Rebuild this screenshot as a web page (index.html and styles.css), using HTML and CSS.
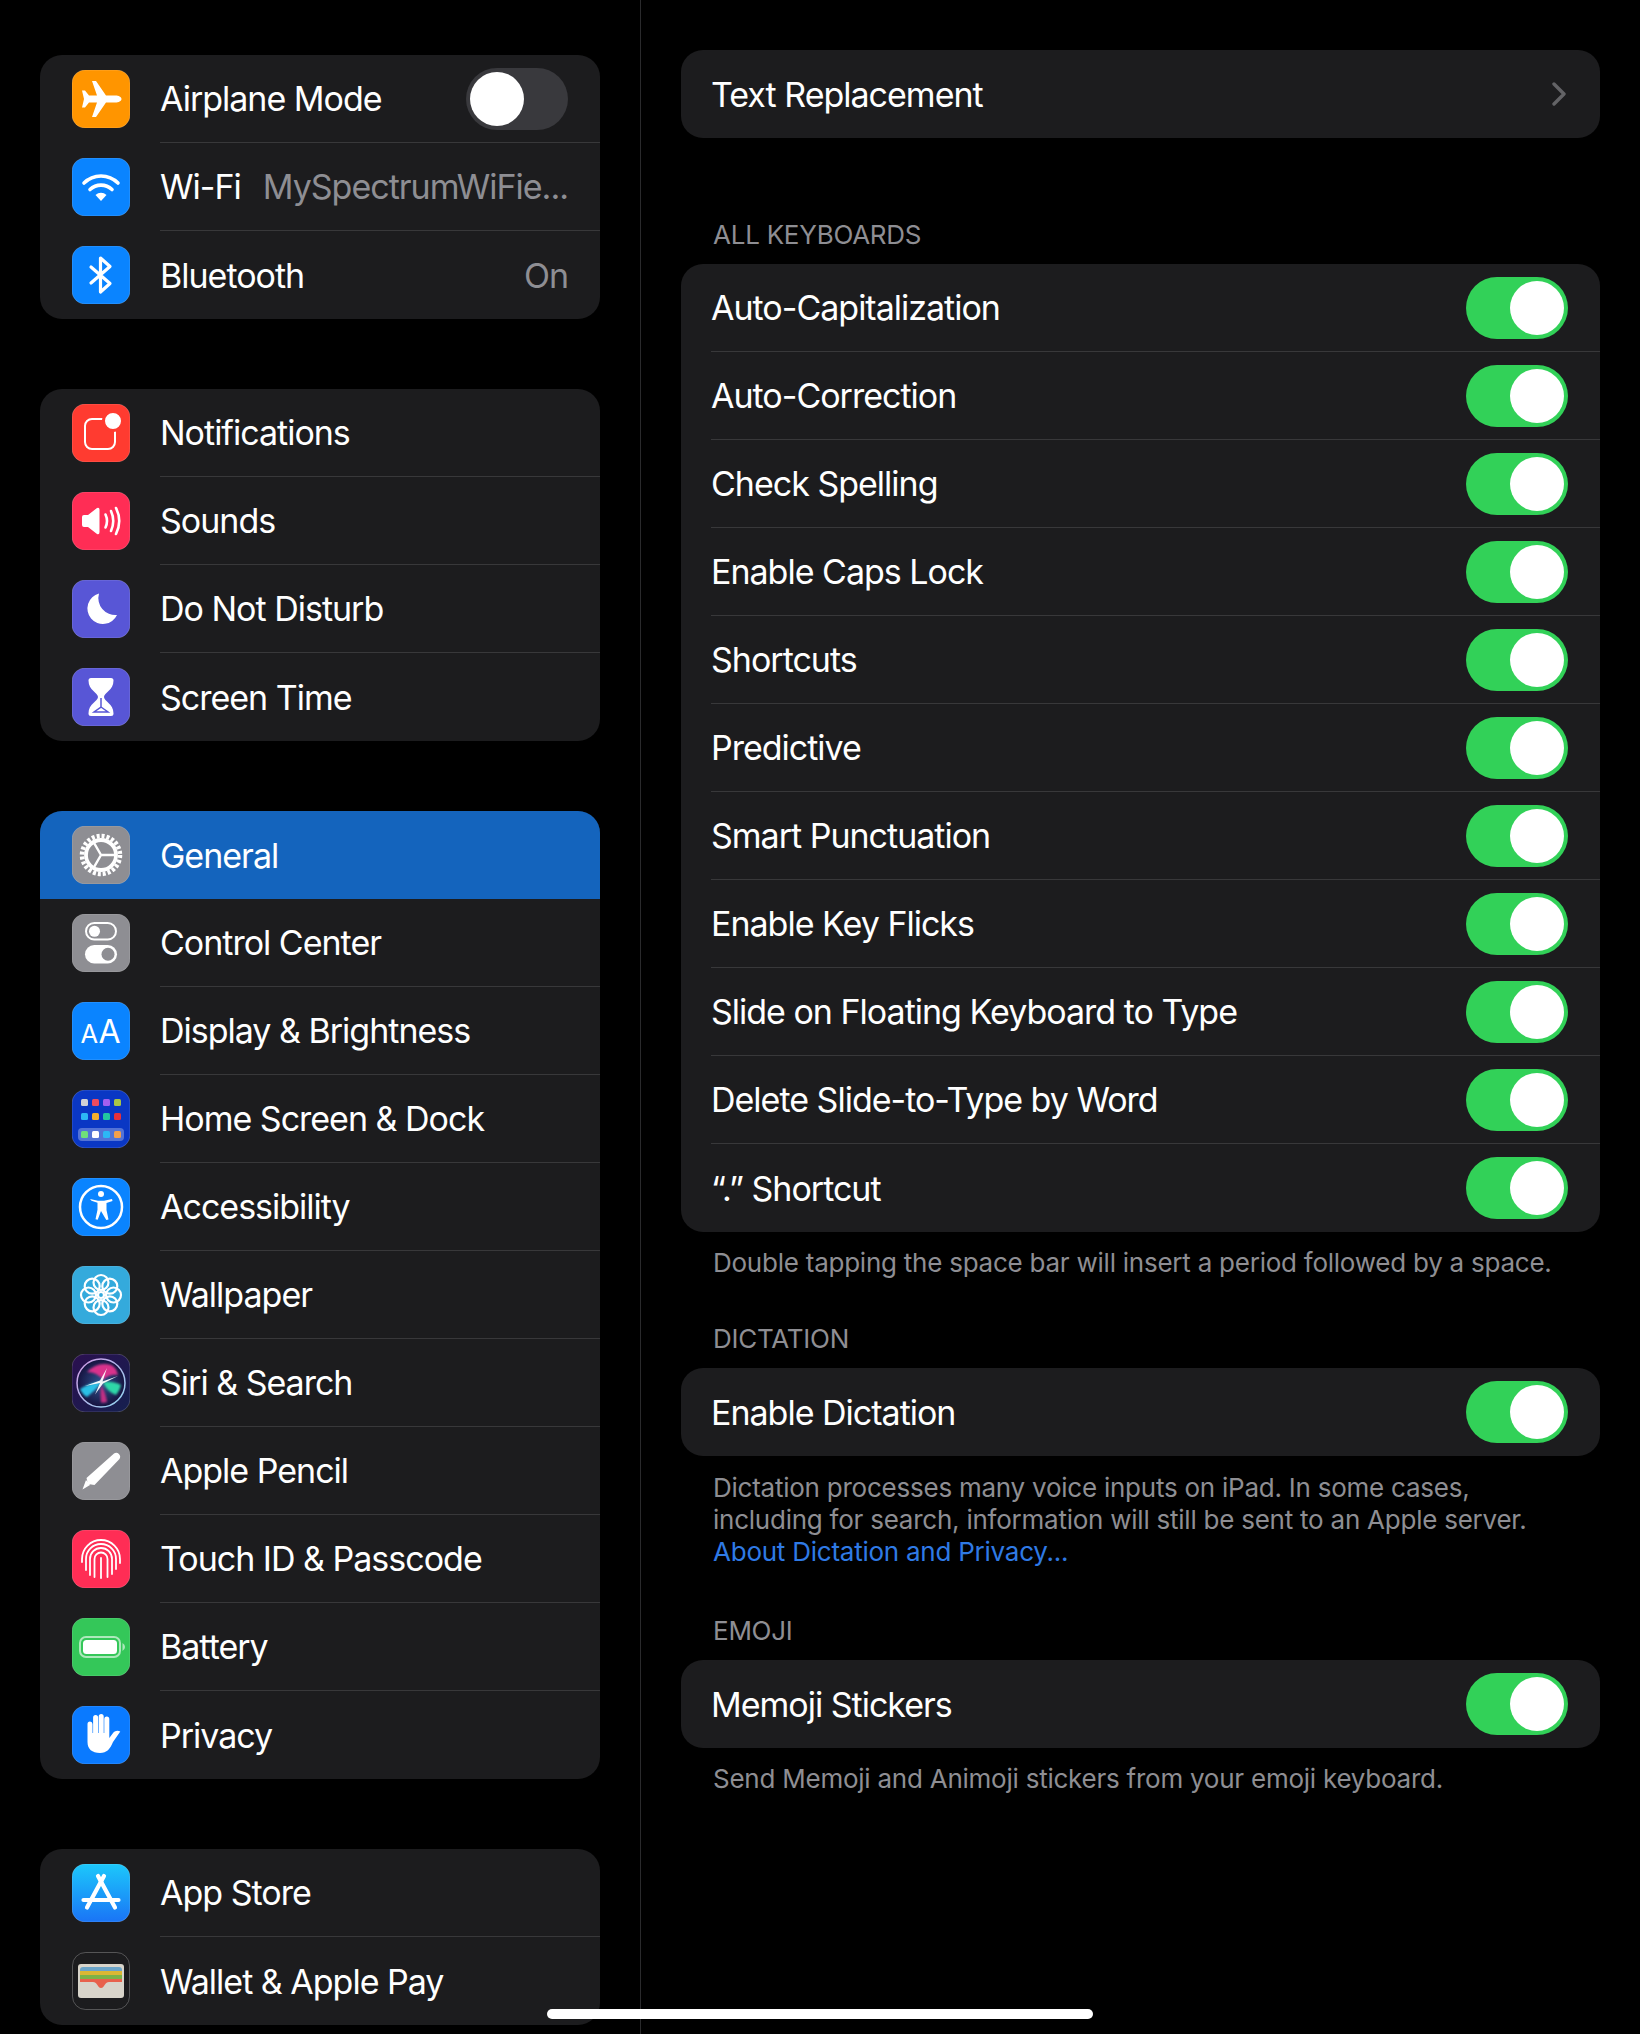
FILE: index.html
```html
<!DOCTYPE html>
<html lang="en">
<head>
    <meta charset="UTF-8">
    <meta name="viewport" content="width=device-width, initial-scale=1.0">
    <title>Keyboard Settings</title>
    <link rel="stylesheet" href="styles.css">
</head>
<body>
    <div class="sidebar">
        <div class="group">
            <div class="nav-row">
                <svg class="icon" viewBox="0 0 58 58"><rect class="tile" width="58" height="58" rx="13" fill="#ff9500"/><path fill="#fff" d="M49.500 29c0-2-3-3.500-6-3.500H34L24 11h-4l5 14.500h-8L13 20.500h-3l2 8.500-2 8.500h3l4-5h8L20 47h4l10-14.500h9.500c3 0 6-1.500 6-3.500z"/></svg>
                <div class="nav-body"><span class="label">Airplane Mode</span><span class="toggle off"><span class="knob"></span></span></div>
            </div>
            <div class="nav-row">
                <svg class="icon" viewBox="0 0 58 58"><rect class="tile" width="58" height="58" rx="13" fill="#0a84ff"/><g fill="none" stroke="#fff" stroke-width="3.600" stroke-linecap="round"><path d="M12 25a24 24 0 0 1 34 0"/><path d="M18 31.500a16 16 0 0 1 22 0"/></g><path fill="#fff" d="M23.500 37a8 8 0 0 1 11 0L29 43z"/></svg>
                <div class="nav-body"><span class="label">Wi-Fi</span><span class="value">MySpectrumWiFie...</span></div>
            </div>
            <div class="nav-row">
                <svg class="icon" viewBox="0 0 58 58"><rect class="tile" width="58" height="58" rx="13" fill="#0a84ff"/><path fill="none" stroke="#fff" stroke-width="3.200" stroke-linecap="round" stroke-linejoin="round" d="M19 21l19 16.500L28.500 46V12l9.500 8.500L19 37"/></svg>
                <div class="nav-body"><span class="label">Bluetooth</span><span class="value">On</span></div>
            </div>
        </div>

        <div class="group">
            <div class="nav-row">
                <svg class="icon" viewBox="0 0 58 58"><rect class="tile" width="58" height="58" rx="13" fill="#ff3b30"/><rect x="13" y="15" width="30" height="30" rx="7" fill="none" stroke="#fff" stroke-width="2"/><circle cx="41" cy="17" r="9.500" fill="#fff" stroke="#ff3b30" stroke-width="3"/></svg>
                <div class="nav-body"><span class="label">Notifications</span></div>
            </div>
            <div class="nav-row">
                <svg class="icon" viewBox="0 0 58 58"><rect class="tile" width="58" height="58" rx="13" fill="#ff2d55"/><path fill="#fff" d="M10 25a2 2 0 0 1 2-2h4l9-7q2.500-1 2.500 2v22q0 3-2.500 2l-9-7h-4a2 2 0 0 1-2-2z"/><g fill="none" stroke="#fff" stroke-width="2.600" stroke-linecap="round"><path d="M33.500 22.500q3 6.500 0 13"/><path d="M39 19q4.500 10 0 20"/><path d="M44 16q6.500 13 0 26"/></g></svg>
                <div class="nav-body"><span class="label">Sounds</span></div>
            </div>
            <div class="nav-row">
                <svg class="icon" viewBox="0 0 58 58"><rect class="tile" width="58" height="58" rx="13" fill="#5856d6"/><path fill="#fff" d="M27 13.500A15.500 15.500 0 1 0 45 35a17 17 0 0 1-18-21.500z"/></svg>
                <div class="nav-body"><span class="label">Do Not Disturb</span></div>
            </div>
            <div class="nav-row">
                <svg class="icon" viewBox="0 0 58 58"><rect class="tile" width="58" height="58" rx="13" fill="#5856d6"/><path fill="#fff" d="M19 10h20a2.500 2.500 0 0 1 2.500 2.500c0 10-9.500 12-9.500 16.500s9.500 6.500 9.500 16.500A2.500 2.500 0 0 1 39 48H19a2.500 2.500 0 0 1-2.500-2.500C16.500 35.500 26 33.500 26 29s-9.500-6.500-9.500-16.500A2.500 2.500 0 0 1 19 10z"/><path fill="none" stroke="#5856d6" stroke-width="1.500" d="M29 30v9l-7 5h14l-7-5"/></svg>
                <div class="nav-body"><span class="label">Screen Time</span></div>
            </div>
        </div>

        <div class="group">
            <div class="nav-row selected">
                <svg class="icon" viewBox="0 0 58 58"><rect class="tile" width="58" height="58" rx="13" fill="#8e8e93"/><circle cx="29" cy="29" r="19" fill="none" stroke="#fff" stroke-width="4.500" stroke-dasharray="3 1.975"/><circle cx="29" cy="29" r="15" fill="none" stroke="#fff" stroke-width="3.800"/><path fill="none" stroke="#fff" stroke-width="2.400" d="M29 29h14M29 29l-7-12.100M29 29l-7 12.100"/></svg>
                <div class="nav-body"><span class="label">General</span></div>
            </div>
            <div class="nav-row">
                <svg class="icon" viewBox="0 0 58 58"><rect class="tile" width="58" height="58" rx="13" fill="#8e8e93"/><rect x="14" y="9" width="30" height="16.500" rx="8.250" fill="none" stroke="#fff" stroke-width="2"/><circle cx="22.500" cy="17.250" r="5.500" fill="#fff"/><rect x="13" y="31" width="32" height="18.500" rx="9.250" fill="#fff"/><circle cx="36" cy="40.250" r="6.500" fill="#8e8e93"/></svg>
                <div class="nav-body"><span class="label">Control Center</span></div>
            </div>
            <div class="nav-row">
                <svg class="icon" viewBox="0 0 58 58"><rect class="tile" width="58" height="58" rx="13" fill="#0a84ff"/><text class="icon-text" x="8.500" y="41" font-size="25.500">A</text><text class="icon-text" x="26.500" y="41" font-size="32">A</text></svg>
                <div class="nav-body"><span class="label">Display &amp; Brightness</span></div>
            </div>
            <div class="nav-row">
                <svg class="icon" viewBox="0 0 58 58"><rect class="tile" width="58" height="58" rx="13" fill="#0a37c4"/><g><rect x="9" y="9" width="7" height="7" rx="1.500" fill="#d1d1d6"/><rect x="20" y="9" width="7" height="7" rx="1.500" fill="#ef4b5f"/><rect x="31" y="9" width="7" height="7" rx="1.500" fill="#a35ff0"/><rect x="42" y="9" width="7" height="7" rx="1.500" fill="#a8c545"/><rect x="9" y="23" width="7" height="7" rx="1.500" fill="#2cb8f5"/><rect x="20" y="23" width="7" height="7" rx="1.500" fill="#f5b02e"/><rect x="31" y="23" width="7" height="7" rx="1.500" fill="#22c8a0"/><rect x="42" y="23" width="7" height="7" rx="1.500" fill="#e8303a"/><rect x="6" y="38" width="46" height="13" rx="4" fill="#fff" fill-opacity=".3"/><rect x="9" y="41" width="7" height="7" rx="1.500" fill="#6fe07a"/><rect x="20" y="41" width="7" height="7" rx="1.500" fill="#fff"/><rect x="31" y="41" width="7" height="7" rx="1.500" fill="#2cb8f5"/><rect x="42" y="41" width="7" height="7" rx="1.500" fill="#f5a04a"/></g></svg>
                <div class="nav-body"><span class="label">Home Screen &amp; Dock</span></div>
            </div>
            <div class="nav-row">
                <svg class="icon" viewBox="0 0 58 58"><rect class="tile" width="58" height="58" rx="13" fill="#0a84ff"/><circle cx="29" cy="29" r="21" fill="none" stroke="#fff" stroke-width="2.500"/><circle cx="29" cy="16" r="3" fill="#fff"/><path fill="#fff" d="M18 21l8 1.800h6l8-1.800.5 2-6 2v7l2 9.500-2.200.5L29 33l-3.300 8.800-2.200-.5 2-9.500v-7l-6-2z"/></svg>
                <div class="nav-body"><span class="label">Accessibility</span></div>
            </div>
            <div class="nav-row">
                <svg class="icon" viewBox="0 0 58 58"><rect class="tile" width="58" height="58" rx="13" fill="#34aadc"/><g fill="none" stroke="#fff" stroke-width="2.200"><circle cx="29" cy="16.500" r="7.500"/><circle cx="29" cy="41.500" r="7.500"/><circle cx="16.500" cy="29" r="7.500"/><circle cx="41.500" cy="29" r="7.500"/><circle cx="20.200" cy="20.200" r="7.500"/><circle cx="37.800" cy="20.200" r="7.500"/><circle cx="20.200" cy="37.800" r="7.500"/><circle cx="37.800" cy="37.800" r="7.500"/><circle cx="29" cy="29" r="3"/></g></svg>
                <div class="nav-body"><span class="label">Wallpaper</span></div>
            </div>
            <div class="nav-row">
                <svg class="icon" viewBox="0 0 58 58"><defs><linearGradient id="siriBg" x1="0" y1="0" x2="1" y2="1"><stop offset="0" stop-color="#2b0f4f"/><stop offset="1" stop-color="#15204f"/></linearGradient><radialGradient id="siriBall"><stop offset="0" stop-color="#2f5590"/><stop offset="1" stop-color="#16123f"/></radialGradient><linearGradient id="siriRing" x1="0" y1="0" x2="1" y2="1"><stop offset="0" stop-color="#d39ae6"/><stop offset="1" stop-color="#8fd6f0"/></linearGradient><filter id="siriBlur" x="-20%" y="-20%" width="140%" height="140%"><feGaussianBlur stdDeviation="1"/></filter></defs><rect class="tile" width="58" height="58" rx="13" fill="url(#siriBg)"/><circle cx="29" cy="29" r="24" fill="url(#siriBall)" stroke="url(#siriRing)" stroke-width="1.500"/><g filter="url(#siriBlur)"><path fill="#d9338c" d="M15 18q11-11 24-7 5 2 7 10-9-1-15 5-6-8-16-8z"/><path fill="#2cc0e6" d="M8 35q11-7 22-7-7 9-15 15-5-3-7-8z"/><path fill="#2ed8a8" d="M31 28q10-1 18 3-1 5-5 10-9-3-13-13z"/><path fill="#c42e84" d="M29 31q5 8 6 17-3 1-6 .5-1-9 0-17.500z"/></g><path fill="#fff" fill-opacity=".95" d="M35 14l-4.500 13.500L46 22l-15 7.500-8 11 5-11.500-15 3 15-5.500z"/></svg>
                <div class="nav-body"><span class="label">Siri &amp; Search</span></div>
            </div>
            <div class="nav-row">
                <svg class="icon" viewBox="0 0 58 58"><rect class="tile" width="58" height="58" rx="13" fill="#8e8e93"/><path fill="#fff" d="M42 11.500a4 4 0 0 1 5.500 5.500L22.500 43l-6.500-1-1.500-6zM14 38l4 5-7.500 4.500z"/></svg>
                <div class="nav-body"><span class="label">Apple Pencil</span></div>
            </div>
            <div class="nav-row">
                <svg class="icon" viewBox="0 0 58 58"><rect class="tile" width="58" height="58" rx="13" fill="#ff2d55"/><g fill="none" stroke="#fff" stroke-width="1.800" stroke-linecap="round"><path d="M10 32v-3a19 19 0 0 1 38 0v4"/><path d="M14 40V29a15 15 0 0 1 30 0v10"/><path d="M18 45V29a11 11 0 0 1 22 0v15"/><path d="M22.500 47V29a6.500 6.500 0 0 1 13 0v18"/><path d="M29 48V28"/></g></svg>
                <div class="nav-body"><span class="label">Touch ID &amp; Passcode</span></div>
            </div>
            <div class="nav-row">
                <svg class="icon" viewBox="0 0 58 58"><rect class="tile" width="58" height="58" rx="13" fill="#34c759"/><rect x="8" y="19" width="40" height="20" rx="6" fill="none" stroke="#fff" stroke-opacity=".6" stroke-width="2"/><rect x="11" y="22" width="34" height="14" rx="3.500" fill="#fff"/><path fill="#fff" fill-opacity=".6" d="M50.500 25q2.500 1.500 2.500 4t-2.500 4z"/></svg>
                <div class="nav-body"><span class="label">Battery</span></div>
            </div>
            <div class="nav-row">
                <svg class="icon" viewBox="0 0 58 58"><rect class="tile" width="58" height="58" rx="13" fill="#0a7aff"/><path fill="#fff" d="M15.500 18a2.500 2.500 0 0 1 5 0v9h.6V11.500a2.500 2.500 0 0 1 5 0V27h.6V10.500a2.500 2.500 0 0 1 5 0V27h.6V13a2.500 2.500 0 0 1 5 0v19l3-4c2-3 5-4 8-2.500L41 36c-3 7-6 11-13 11-8 0-12.500-4-12.500-11z"/></svg>
                <div class="nav-body"><span class="label">Privacy</span></div>
            </div>
        </div>

        <div class="group">
            <div class="nav-row">
                <svg class="icon" viewBox="0 0 58 58"><defs><linearGradient id="storeBg" x1="0" y1="0" x2="0" y2="1"><stop offset="0" stop-color="#1cc8fb"/><stop offset="1" stop-color="#1a74f6"/></linearGradient></defs><rect class="tile" width="58" height="58" rx="13" fill="url(#storeBg)"/><g fill="none" stroke="#fff" stroke-width="4.200" stroke-linecap="round"><path d="M32 12L15 43.500"/><path d="M26 12l17 31.500"/><path d="M11.500 36h35"/></g></svg>
                <div class="nav-body"><span class="label">App Store</span></div>
            </div>
            <div class="nav-row">
                <svg class="icon" viewBox="0 0 58 58"><rect class="tile wallet-tile" x=".5" y=".5" width="57" height="57" rx="13" fill="#1c1c1e"/><rect x="6" y="12" width="46" height="34" rx="3" fill="#d8d4ca"/><path fill="#6ba4c8" d="M8 18a3 3 0 0 1 3-3h36a3 3 0 0 1 3 3v2H8z"/><rect x="8" y="19" width="42" height="5" fill="#dbb733"/><rect x="8" y="23" width="42" height="5" fill="#7db246"/><path fill="#e8614c" d="M8 27h42v3H8z"/><path fill="#e8614c" d="M8 30h13c2 0 3 1 4 2.500 1.500 2.500 2.500 3.500 4 3.500s2.500-1 4-3.500c1-1.500 2-2.500 4-2.500h13v-3H8z"/></svg>
                <div class="nav-body"><span class="label">Wallet &amp; Apple Pay</span></div>
            </div>
        </div>
    </div>

    <div class="detail">
        <div class="card">
            <div class="row"><span class="label">Text Replacement</span><svg class="chevron" viewBox="0 0 14 24"><path fill="none" stroke="#636366" stroke-width="3.400" stroke-linecap="round" stroke-linejoin="round" d="M2 2l10 10L2 22"/></svg></div>
        </div>

        <div class="section-title first">ALL KEYBOARDS</div>
        <div class="card">
            <div class="row"><span class="label">Auto-Capitalization</span><span class="toggle"><span class="knob"></span></span></div>
            <div class="row"><span class="label">Auto-Correction</span><span class="toggle"><span class="knob"></span></span></div>
            <div class="row"><span class="label">Check Spelling</span><span class="toggle"><span class="knob"></span></span></div>
            <div class="row"><span class="label">Enable Caps Lock</span><span class="toggle"><span class="knob"></span></span></div>
            <div class="row"><span class="label">Shortcuts</span><span class="toggle"><span class="knob"></span></span></div>
            <div class="row"><span class="label">Predictive</span><span class="toggle"><span class="knob"></span></span></div>
            <div class="row"><span class="label">Smart Punctuation</span><span class="toggle"><span class="knob"></span></span></div>
            <div class="row"><span class="label">Enable Key Flicks</span><span class="toggle"><span class="knob"></span></span></div>
            <div class="row"><span class="label">Slide on Floating Keyboard to Type</span><span class="toggle"><span class="knob"></span></span></div>
            <div class="row"><span class="label">Delete Slide-to-Type by Word</span><span class="toggle"><span class="knob"></span></span></div>
            <div class="row"><span class="label">“.” Shortcut</span><span class="toggle"><span class="knob"></span></span></div>
        </div>
        <p class="note">Double tapping the space bar will insert a period followed by a space.</p>

        <div class="section-title">DICTATION</div>
        <div class="card">
            <div class="row"><span class="label">Enable Dictation</span><span class="toggle"><span class="knob"></span></span></div>
        </div>
        <p class="note multi">Dictation processes many voice inputs on iPad. In some cases,<br>including for search, information will still be sent to an Apple server.<br><a class="link" href="#">About Dictation and Privacy...</a></p>

        <div class="section-title emoji">EMOJI</div>
        <div class="card">
            <div class="row"><span class="label">Memoji Stickers</span><span class="toggle"><span class="knob"></span></span></div>
        </div>
        <p class="note">Send Memoji and Animoji stickers from your emoji keyboard.</p>
    </div>

    <div class="home-bar"></div>
</body>
</html>
```

FILE: styles.css
```css
* {
    box-sizing: border-box;
}

html, body {
    margin: 0;
    height: 2034px;
    overflow: hidden;
}

body {
    display: flex;
    position: relative;
    background-color: #000;
    color: #fff;
    font-family: Inter, "Noto Sans", sans-serif;
    font-size: 34px;
    letter-spacing: -1px;
}

.sidebar {
    width: 641px;
    height: 2034px;
    padding: 55px 40px 0;
    border-right: 1px solid #2a2a2c;
    overflow: hidden;
}

.group {
    background-color: #1c1c1e;
    border-radius: 22px;
    margin-bottom: 70px;
    overflow: hidden;
}

.nav-row {
    display: flex;
    align-items: center;
    height: 88px;
    padding-left: 32px;
}

.nav-row.selected {
    background-color: #1464bd;
}

.icon {
    width: 58px;
    height: 58px;
    flex: none;
    margin-right: 30px;
}

.tile {
    stroke: #fff;
    stroke-opacity: 0.18;
    stroke-width: 1;
}

.wallet-tile {
    stroke-opacity: 0.25;
}

.icon-text {
    fill: #fff;
    font-family: Inter, sans-serif;
    letter-spacing: 0;
}

.label {
    white-space: nowrap;
}

.nav-body {
    display: flex;
    align-items: center;
    justify-content: space-between;
    flex: 1;
    min-width: 0;
    height: 88px;
    padding-right: 32px;
    border-bottom: 1px solid #38383a;
}

.nav-row:last-child .nav-body,
.nav-row.selected .nav-body {
    border-bottom: none;
}

.value {
    color: #8e8e93;
    white-space: nowrap;
}

.toggle {
    display: flex;
    justify-content: flex-end;
    align-items: center;
    width: 102px;
    height: 62px;
    padding: 0 4px;
    background-color: #32d158;
    border-radius: 31px;
}

.toggle.off {
    justify-content: flex-start;
    background-color: #39393d;
}

.knob {
    width: 54px;
    height: 54px;
    background-color: #fff;
    border-radius: 50%;
}

.detail {
    width: 999px;
    padding: 50px 40px 0;
}

.card {
    background-color: #1c1c1e;
    border-radius: 22px;
    padding-left: 30px;
    overflow: hidden;
}

.row {
    display: flex;
    align-items: center;
    justify-content: space-between;
    height: 88px;
    padding-right: 32px;
    border-bottom: 1px solid #38383a;
}

.row:last-child {
    border-bottom: none;
}

.chevron {
    width: 14px;
    height: 24px;
    margin-right: 2px;
}

.section-title {
    margin: 44px 0 13px 32px;
    color: #8e8e93;
    font-size: 26px;
    line-height: 32px;
    letter-spacing: -0.25px;
}

.section-title.first {
    margin-top: 81px;
}

.section-title.emoji {
    margin-top: 47px;
}

.note {
    margin: 15px 0 0 32px;
    color: #8e8e93;
    font-size: 26px;
    line-height: 32px;
    letter-spacing: -0.24px;
}

.note.multi {
    margin-top: 16px;
}

.link {
    color: #2f7ae5;
    text-decoration: none;
}

.home-bar {
    position: absolute;
    left: 547px;
    bottom: 15px;
    width: 546px;
    height: 10px;
    background-color: #fff;
    border-radius: 5px;
}
```
